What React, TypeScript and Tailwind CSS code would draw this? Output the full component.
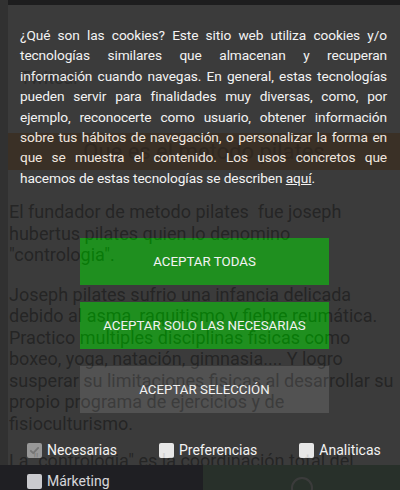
import React, { useState } from 'react';

// Options shown under the consent buttons
const cookieOptions = [
    { id: 'necesarias', label: 'Necesarias', fixed: true },
    { id: 'preferencias', label: 'Preferencias', fixed: false },
    { id: 'analiticas', label: 'Analiticas', fixed: false },
    { id: 'marketing', label: 'Márketing', fixed: false },
];

// Consent text, broken as in the mobile layout
const consentLines = [
    '¿Qué son las cookies? Este sitio web utiliza cookies y/o',
    'tecnologías similares que almacenan y recuperan',
    'información cuando navegas. En general, estas tecnologías',
    'pueden servir para finalidades muy diversas, como, por',
    'ejemplo, reconocerte como usuario, obtener información',
    'sobre tus hábitos de navegación, o personalizar la forma en',
    'que se muestra el contenido. Los usos concretos que',
];

const articleIntro = ['El fundador de metodo pilates\u00a0 fue joseph', 'hubertus pilates quien lo denomino', '"contrologia".'];

const articleBody = [
    'Joseph pilates sufrio una infancia delicada',
    'debido al asma, raquitismo y fiebre reumática.',
    'Practico multiples disciplinas fisicas como',
    'boxeo, yoga, natación, gimnasia.... Y logro',
    'susperar su limitaciones fisicas al desarrollar su',
    'propio programa de ejercicios y de',
    'fisioculturismo.',
];

const CheckBox = ({ checked, disabled }: { checked: boolean; disabled?: boolean }) => (
    <span
        className={
            disabled
                ? 'flex h-[15px] w-[15px] shrink-0 items-center justify-center rounded-[2px] bg-[#8a8a8a]'
                : 'flex h-[15px] w-[15px] shrink-0 items-center justify-center rounded-[2px] bg-[#e4e4e4]'
        }
    >
        {checked && (
            <svg width="11" height="11" viewBox="0 0 12 12" fill="none">
                <path d="M2 6.3l2.6 2.6L10 3.2" stroke="#626262" strokeWidth="2" strokeLinecap="round" strokeLinejoin="round" />
            </svg>
        )}
    </span>
);

/**
 * Page behind the consent overlay (pilates article)
 */
const ArticlePage = () => (
    <div className="ml-2 flex h-full flex-col bg-white text-[#4a4a4a]">
        <div className="h-[5px] bg-[#0c0c12]" />
        <div className="mt-[62px] pl-3 text-[18px] leading-[22px] text-[#8a8a8a]">Twitear</div>
        <div className="mt-[44px] flex h-[37px] items-center justify-center bg-[#f0a050] text-[22px] text-[#a06028]">
            Que es el metodo pilates
        </div>
        <div className="mt-[31px] pl-[1px] text-[18px] leading-[21.5px] whitespace-nowrap">
            <div>
                {articleIntro.map(line => (
                    <div key={line}>{line}</div>
                ))}
            </div>
            <div className="mt-[18px]">
                {articleBody.map(line => (
                    <div key={line}>{line}</div>
                ))}
            </div>
            <div className="mt-[16px]">La "contrologia" es la coordinación total del</div>
        </div>
    </div>
);

export default function App() {
    const [selected, setSelected] = useState<Record<string, boolean>>({ necesarias: true });

    const toggle = (id: string) => setSelected(prev => ({ ...prev, [id]: !prev[id] }));

    return (
        <div className="relative h-[490px] w-[400px] overflow-hidden bg-[#a8a8a8] font-['Roboto',sans-serif]">
            <ArticlePage />

            {/* fixed share bar at the bottom of the page */}
            <div className="absolute bottom-0 left-0 flex h-[25px] w-full">
                <div className="w-[203px] bg-[#181838]" />
                <div className="flex flex-1 items-start justify-center bg-[#60a070] pt-[12px]">
                    <span className="h-[22px] w-[22px] rounded-full border-2 border-white" />
                </div>
            </div>

            {/* Cookie consent overlay */}
            <div className="absolute inset-0 flex flex-col bg-[#202020] opacity-[0.875]">
                <div className="pl-5 pr-[13px] pt-[25px] text-[13.7px] leading-[20.4px] tracking-[-0.1px] text-[#f2f2f2]">
                    {consentLines.map(line => (
                        <div key={line} className="whitespace-nowrap text-justify [text-align-last:justify]">
                            {line}
                        </div>
                    ))}
                    <div className="whitespace-nowrap">
                        hacemos de estas tecnologías se describen <span className="underline">aquí</span>.
                    </div>
                </div>

                <div className="mt-[50px] flex flex-col items-center gap-[17px] pl-[9px]">
                    <button className="h-[47px] w-[249px] bg-[#008000] text-[13.3px] uppercase text-[#f2f2f2]">
                        Aceptar todas
                    </button>
                    <button className="h-[47px] w-[249px] bg-[#008000] text-[13.3px] uppercase text-[#f2f2f2]">
                        Aceptar solo las necesarias
                    </button>
                    <button className="h-[47px] w-[249px] bg-[#3a3a3a] text-[13.3px] uppercase text-[#f2f2f2]">
                        Aceptar selección
                    </button>
                </div>

                <div className="mt-[27px] flex flex-wrap gap-x-[42px] gap-y-[11px] pl-[27px] pr-2">
                    {cookieOptions.map(opt => (
                        <label
                            key={opt.id}
                            className="flex h-[20px] items-center gap-[5px] text-[14px] text-[#f2f2f2]"
                            onClick={() => !opt.fixed && toggle(opt.id)}
                        >
                            <CheckBox checked={!!selected[opt.id]} disabled={opt.fixed} />
                            {opt.label}
                        </label>
                    ))}
                </div>
            </div>
        </div>
    );
}
